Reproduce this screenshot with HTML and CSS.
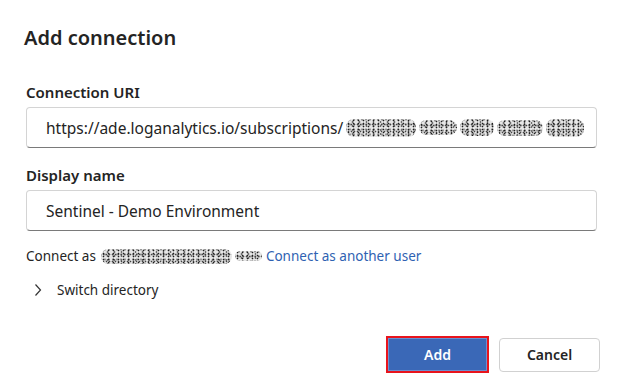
FILE: index.html
```html
<!DOCTYPE html>
<html>
<head>
<meta charset="utf-8">
<link rel="stylesheet" href="styles.css">
</head>
<body>
<div class="dialog">
  <h1 class="title">Add connection</h1>
  <div class="field">
    <label class="label">Connection URI</label>
    <div class="input"><span>https://ade.loganalytics.io/subscriptions/</span><span class="redact-group"><span class="redact w69"></span><span class="redact w38"></span><span class="redact w33"></span><span class="redact w45"></span><span class="redact w37"></span></span></div>
  </div>
  <div class="field second">
    <label class="label">Display name</label>
    <div class="input"><span>Sentinel - Demo Environment</span></div>
  </div>
  <div class="connect-row">
    <span>Connect as</span><span class="redact-group user"><span class="redact w132s"></span><span class="redact w26s"></span></span><a class="link">Connect as another user</a>
  </div>
  <div class="switch-row">
    <svg class="chev" width="10" height="14" viewBox="0 0 10 14"><path d="M2.5 1.5 L7.5 7 L2.5 12.5" fill="none" stroke="#333" stroke-width="1.2"/></svg>
    <span>Switch directory</span>
  </div>
  <div class="actions">
    <button class="btn primary">Add</button>
    <button class="btn secondary">Cancel</button>
  </div>
</div>
</body>
</html>
```
FILE: styles.css
```css
* { box-sizing: border-box; }
body {
  margin: 0;
  background: #ffffff;
  font-family: "Noto Sans", "Open Sans", sans-serif;
  color: #242424;
}
.dialog {
  width: 620px;
  height: 392px;
  padding: 24px 23px 0 26px;
  display: flex;
  flex-direction: column;
}
.title {
  margin: 0 0 0 -2px;
  font-size: 20px;
  font-weight: 600;
  line-height: 28px;
  color: #242424;
}
.field {
  display: flex;
  flex-direction: column;
  margin-top: 29px;
}
.field.second { margin-top: 16px; }
.label {
  font-size: 15px;
  font-weight: 600;
  line-height: 22px;
  margin-bottom: 4px;
}
.input {
  height: 41px;
  border: 1px solid #d4d4d4;
  border-bottom-color: #7a7a7a;
  border-radius: 4px;
  padding: 0 19px;
  display: flex;
  align-items: center;
  font-size: 15.5px;
  color: #242424;
  white-space: nowrap;
  overflow: hidden;
}
.redact-group {
  display: inline-flex;
  gap: 3px;
  margin-left: 3px;
  height: 20px;
  align-items: center;
}
.redact-group.user {
  height: 15px;
  margin: 0 4px 0 5px;
}
.redact {
  display: inline-block;
  height: 100%;
  background-color: #e6e6e6;
  background-image:
    radial-gradient(circle, #1e1e1e 0.7px, transparent 1.1px),
    radial-gradient(circle, #444 0.7px, transparent 1.1px),
    radial-gradient(circle, #6e6e6e 0.8px, transparent 1.2px),
    radial-gradient(circle, #999 0.9px, transparent 1.3px);
  background-size: 5px 3px, 3px 7px, 7px 4px, 4px 5px;
  background-position: 0 0, 1px 2px, 3px 1px, 2px 3px;
  border-radius: 8px;
}
.w69 { width: 70px; height: 18px; }
.w38 { width: 38px; height: 15px; }
.w33 { width: 34px; height: 17px; }
.w45 { width: 46px; height: 16px; }
.w37 { width: 38px; height: 18px; }
.w132s { width: 131px; }
.w26s { width: 27px; height: 10px; }
.connect-row {
  margin-top: 15px;
  font-size: 13.5px;
  line-height: 20px;
  display: flex;
  align-items: center;
}
.link { color: #2f62b2; }
.switch-row {
  margin-top: 14px;
  font-size: 13.5px;
  line-height: 20px;
  display: flex;
  align-items: center;
  padding-left: 7px;
}
.chev { margin-right: 14px; }
.actions {
  margin-top: auto;
  margin-bottom: 19px;
  margin-right: -3px;
  display: flex;
  justify-content: flex-end;
  gap: 10px;
}
.btn {
  font-family: inherit;
  font-size: 14px;
  font-weight: 600;
  border-radius: 4px;
  height: 34px;
  cursor: pointer;
}
.primary {
  width: 103px;
  height: 37px;
  background: #3a68b7;
  color: #ffffff;
  border: 2px solid #e8141c;
  border-radius: 0;
  box-shadow: inset 0 0 0 1px #6a8fd0;
}
.secondary {
  width: 101px;
  background: #ffffff;
  color: #242424;
  border: 1px solid #d1d1d1;
  align-self: center;
}
```
